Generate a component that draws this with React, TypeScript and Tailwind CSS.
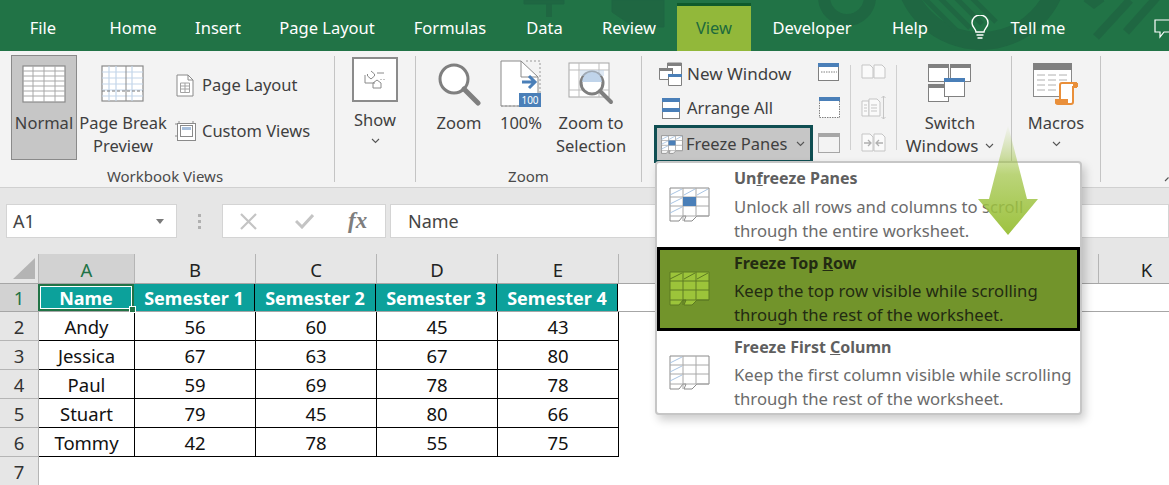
import React from "react";

const FONT = { fontFamily: '"Noto Sans", "Open Sans", sans-serif' };

function Chevron({ className = "" }: { className?: string }) {
  return (
    <svg width="9" height="6" viewBox="0 0 9 6" className={className}>
      <path d="M1 1l3.5 3.5L8 1" fill="none" stroke="#555" strokeWidth="1.1" />
    </svg>
  );
}

function NormalIcon() {
  return (
    <svg width="44" height="38" viewBox="0 0 44 38">
      <rect x="1" y="1" width="42" height="36" fill="#fff" stroke="#8a8a8a" strokeWidth="1.2" />
      {[6, 11, 16, 21, 26, 31].map((y) => (
        <path key={y} d={`M1 ${y}h42`} stroke="#a8a8a8" strokeWidth="1" />
      ))}
      {[11, 22, 33].map((x) => (
        <path key={x} d={`M${x} 1v36`} stroke="#a8a8a8" strokeWidth="1" />
      ))}
    </svg>
  );
}

function PageBreakIcon() {
  return (
    <svg width="44" height="38" viewBox="0 0 44 38">
      <rect x="1" y="1" width="41" height="35" fill="#fff" stroke="#8a8a8a" strokeWidth="1.2" />
      {[7, 13, 19, 25, 31].map((y) => (
        <path key={y} d={`M1 ${y}h41`} stroke="#c3d5ea" strokeWidth="1.2" />
      ))}
      {[8, 15, 31].map((x) => (
        <path key={x} d={`M${x} 1v35`} stroke="#c3d5ea" strokeWidth="1.2" />
      ))}
      <path d="M25 1v35" stroke="#8a8a8a" strokeWidth="1" />
      <path d="M1 26h41" stroke="#7a7a7a" strokeWidth="1" strokeDasharray="3 2" />
    </svg>
  );
}

function PageLayoutIcon() {
  return (
    <svg width="18" height="23" viewBox="0 0 18 23">
      <path d="M1 1h11l5 5v16H1z" fill="#fff" stroke="#8a8a8a" />
      <path d="M12 1v5h5" fill="none" stroke="#8a8a8a" />
      <path d="M4.5 9h9v9.5h-9zM4.5 12h9M4.5 15h9M9 9v9.5" fill="none" stroke="#a2a2a2" />
    </svg>
  );
}

function CustomViewsIcon() {
  return (
    <svg width="22" height="22" viewBox="0 0 22 22">
      <path d="M0 4h2M0 16h2M4 1v2M18 1v2M4 19v2" stroke="#8a8a8a" />
      <rect x="2.5" y="3.5" width="18" height="17" fill="#fff" stroke="#8a8a8a" />
      <rect x="5.5" y="5.5" width="12" height="11" fill="#fff" stroke="#8a8a8a" />
      <rect x="7" y="7" width="9" height="3" fill="#a7bfdc" />
    </svg>
  );
}

function ShowBox() {
  return (
    <div className="w-[46px] h-[45px] border-[2px] border-[#8b8b8b] bg-white flex items-center justify-center">
      <svg width="22" height="20" viewBox="0 0 22 20">
        <path
          d="M7 1l3.5 3V6L7 9 3.5 6V4M1 5v8h10M13 3h7M17 9v1M20 9v1M9 13l4-3 4 3v5H9z"
          fill="none"
          stroke="#8a8a8a"
          strokeWidth="1"
        />
      </svg>
    </div>
  );
}

function ZoomIcon() {
  return (
    <svg width="44" height="44" viewBox="0 0 44 44">
      <circle cx="17" cy="17" r="14" fill="#fff" stroke="#7f7f7f" strokeWidth="3" />
      <path d="M27 27l14 14" stroke="#7f7f7f" strokeWidth="5" strokeLinecap="round" />
    </svg>
  );
}

function HundredIcon() {
  return (
    <svg width="42" height="48" viewBox="0 0 42 48">
      <path d="M1 1h20l17 16v29H1z" fill="#fff" stroke="#8a8a8a" />
      <path d="M21 1v16h17" fill="none" stroke="#8a8a8a" />
      <path d="M26 1h14v45H1" fill="none" stroke="#999" strokeDasharray="2 2" />
      <path d="M22 22h13M29 16l6 6-6 6" fill="none" stroke="#4a7fb8" strokeWidth="3" />
      <rect x="19" y="33" width="22" height="14" fill="#4a7fb8" />
      <text x="30" y="44" textAnchor="middle" fontSize="10" fill="#fff" style={FONT}>
        100
      </text>
    </svg>
  );
}

function ZoomSelIcon() {
  return (
    <svg width="46" height="44" viewBox="0 0 46 44">
      <rect x="1" y="1" width="40" height="34" fill="#fff" stroke="#a5a5a5" />
      <path d="M1 8h40M1 28h40M11 1v34M31 1v34" stroke="#bdbdbd" />
      <circle cx="24" cy="21" r="11" fill="#fff" stroke="#7f7f7f" strokeWidth="3" />
      <path d="M14 20a10 10 0 0 1 20 0z" fill="#c0d4ea" />
      <path d="M12 8h24v6H12z" fill="#c0d4ea" opacity="0.5" />
      <path d="M32 29l11 11" stroke="#7f7f7f" strokeWidth="4" strokeLinecap="round" />
    </svg>
  );
}

function NewWindowIcon() {
  return (
    <svg width="24" height="24" viewBox="0 0 24 24">
      <path d="M8.5 1h14v13h-14z" fill="#fff" stroke="#808080" />
      <path d="M8 1h15v3H8z" fill="#808080" />
      <path d="M.5 6.5h13v11H.5z" fill="#fff" stroke="#808080" />
      <path d="M0 6h14v3H0z" fill="#808080" />
      <path d="M9.5 12.5h13v11h-13z" fill="#fff" stroke="#808080" />
      <path d="M9 12h14v3H9z" fill="#4a7fb8" />
    </svg>
  );
}

function ArrangeIcon() {
  return (
    <svg width="18" height="21" viewBox="0 0 18 21">
      <rect x=".5" y=".5" width="17" height="20" fill="#fff" stroke="#808080" />
      <path d="M0 0h18v4H0zM0 10h18v4H0z" fill="#4a7fb8" />
    </svg>
  );
}

function FreezeBase({ kind, w = 22, h = 19 }: { kind: "small" | "none" | "top" | "first"; w?: number; h?: number }) {
  const top = kind === "top";
  const line = top ? "#5d7a22" : "#8a8a8a";
  const inner = top ? "#5d7a22" : "#a8a8a8";
  const hatch = top ? "#5d7a22" : "#a9c4e2";
  const fill = top ? "#9cc43a" : "#fff";
  const sw = w < 30 ? 1.5 : 1;
  return (
    <svg width={w} height={h} viewBox="0 0 41 35">
      <path d="M1 1h39v28H28l-5 5H15l2-5H14l-4 5H1z" fill={fill} stroke={line} strokeWidth={sw} />
      <path d="M1 10h39M1 19h39M1 29h39M14 1v33M27 1v28" stroke={inner} strokeWidth={sw} />
      {kind === "none" || kind === "small" ? (
        <>
          <path d="M1 8l12-6M15 8l11-6M28 8l11-6" stroke={hatch} strokeWidth={w < 30 ? 1.6 : 1} />
          <path d="M1 17l12-6M1 26l12-6" stroke={hatch} strokeWidth={w < 30 ? 1.6 : 1} />
          <rect x="14" y="10" width="13" height="9" fill="#4a7fb8" />
        </>
      ) : null}
      {top ? <path d="M1 8l12-6M15 8l11-6M28 8l11-6" stroke={hatch} /> : null}
      {kind === "first" ? <path d="M1 8l12-6M1 17l12-6M1 26l12-6" stroke={hatch} /> : null}
    </svg>
  );
}

function SmallWin({ kind }: { kind: "split" | "hide" | "unhide" }) {
  return (
    <svg width="22" height="21" viewBox="0 0 22 21">
      {kind === "split" && (
        <>
          <rect x=".5" y="2.5" width="20" height="16" fill="#fff" stroke="#808080" />
          <path d="M0 1h21v4H0z" fill="#4a7fb8" />
          <path d="M3 10h16" stroke="#808080" strokeDasharray="1.5 1" />
        </>
      )}
      {kind === "hide" && (
        <>
          <rect x="1.5" y="1.5" width="20" height="19" fill="#fff" stroke="#808080" strokeDasharray="1.5 1" />
          <path d="M1 0h21v4H1z" fill="#4a7fb8" />
        </>
      )}
      {kind === "unhide" && (
        <>
          <rect x=".5" y="1.5" width="21" height="19" fill="none" stroke="#a6a6a6" />
          <path d="M0 1h22v4H0z" fill="#a6a6a6" />
        </>
      )}
    </svg>
  );
}

function DisabledPages({ kind }: { kind: "side" | "sync" | "reset" }) {
  const s = "#c5c5c5";
  return (
    <svg width="25" height="25" viewBox="0 0 25 25">
      {kind !== "sync" && (
        <>
          <path d={kind === "side" ? "M1 5h8l3 3v10H1z" : "M1 4h8l3 3v14H1z"} fill="#fafafa" stroke={s} />
          <path d={kind === "side" ? "M13 5h8l3 3v10H13z" : "M13 4h8l3 3v14H13z"} fill="#fafafa" stroke={s} />
          {kind === "reset" && <path d="M3 13h6M7 10l3 3-3 3M22 13h-7M18 10l-3 3 3 3" fill="none" stroke="#b0b0b0" strokeWidth="1.3" />}
        </>
      )}
      {kind === "sync" && (
        <>
          <path d="M1 6h7v15H1z" fill="#fafafa" stroke={s} />
          <path d="M8 4h8l3 3v14H8z" fill="#fafafa" stroke={s} />
          <path d="M10 10h6M10 13h6M10 16h6M3 10h3M3 13h3M3 16h3" stroke={s} />
          <path d="M22.5 1v23M20.5 3l2-2 2 2M20.5 22l2 2 2-2" fill="none" stroke={s} />
        </>
      )}
    </svg>
  );
}

function SwitchIcon() {
  return (
    <svg width="44" height="39" viewBox="0 0 44 39">
      {[
        [0, 0, 21, 18],
        [22, 0, 21, 18],
        [0, 20, 21, 18],
      ].map(([x, y, w, h], i) => (
        <g key={i}>
          <rect x={x + 0.5} y={y + 0.5} width={w - 1} height={h - 1} fill="#fff" stroke="#808080" />
          <rect x={x} y={y} width={w} height="4" fill="#808080" />
        </g>
      ))}
      <rect x="16.5" y="14.5" width="20" height="18" fill="#fff" stroke="#808080" />
      <rect x="16" y="14" width="21" height="4" fill="#4a7fb8" />
    </svg>
  );
}

function MacrosIcon() {
  return (
    <svg width="46" height="42" viewBox="0 0 46 42">
      <rect x=".5" y=".5" width="38" height="33" fill="#fff" stroke="#8a8a8a" />
      <rect x="0" y="0" width="39" height="7" fill="#808080" />
      <path d="M4 12h8M15 12h8M26 12h8M4 17h8M15 17h8M26 17h8M4 22h8M15 22h8M4 27h8M15 27h8" stroke="#b0b0b0" />
      <path d="M27 22a2 2 0 0 1 2-2h14v4h-3v15a2 2 0 0 1-2 2H25a3 3 0 0 1-2-1l0-3h4z" fill="#fff" stroke="#e98f3a" strokeWidth="2" />
      <path d="M23 36h12v5H25a3 3 0 0 1-2-3z" fill="#e98f3a" />
      <path d="M40 20h5v4h-5z" fill="#e98f3a" />
    </svg>
  );
}

function LargeButton({ w, icon, lines }: { w: string; icon: React.ReactNode; lines: string[] }) {
  return (
    <div className={`${w} flex flex-col items-center text-[#3f3f3f] shrink-0`}>
      <div className="h-[55px] flex items-center justify-center shrink-0">{icon}</div>
      {lines.map((l) => (
        <div key={l} className="text-[16.5px] leading-[23px] whitespace-nowrap">
          {l}
        </div>
      ))}
    </div>
  );
}

function Group({ w, label, labelClass = "", children }: { w: string; label?: string; labelClass?: string; children: React.ReactNode }) {
  return (
    <div className={`${w} h-[126px] flex flex-col border-r border-[#c4c4c4] shrink-0`}>
      <div className="h-[107px] flex shrink-0">{children}</div>
      {label && <div className={`text-[15px] leading-[26px] text-center text-[#4a4a4a] ${labelClass}`}>{label}</div>}
    </div>
  );
}

function Ribbon() {
  return (
    <div className="h-[137px] bg-[#f3f3f3] pt-[5px] flex border-b border-[#d0d0d0] relative">
      <Group w="w-[335px]" label="Workbook Views" labelClass="pr-[4px]">
        <div className="w-[11px] shrink-0" />
        <div className="w-[66px] h-[105px] -mt-px bg-[#c6c6c6] border border-[#8a8a8a] flex flex-col items-center text-[#3f3f3f]">
          <div className="h-[55px] flex items-center justify-center shrink-0">
            <NormalIcon />
          </div>
          <div className="text-[16.5px] leading-[23px]">Normal</div>
        </div>
        <LargeButton w="w-[92px]" icon={<PageBreakIcon />} lines={["Page Break", "Preview"]} />
        <div className="flex flex-col text-[16.5px] text-[#3f3f3f] pl-[6px]">
          <div className="h-[46px] mt-[6px] flex items-center gap-[8px] pl-[1px]">
            <PageLayoutIcon />
            <span>Page Layout</span>
          </div>
          <div className="h-[46px] flex items-center gap-[5px]">
            <CustomViewsIcon />
            <span>Custom Views</span>
          </div>
        </div>
      </Group>
      <Group w="w-[81px]">
        <div className="w-full flex flex-col items-center text-[#3f3f3f]">
          <div className="mt-[1px]">
            <ShowBox />
          </div>
          <div className="text-[16.5px] leading-[23px] mt-[6px]">Show</div>
          <Chevron className="mt-[7px]" />
        </div>
      </Group>
      <Group w="w-[226px]" label="Zoom">
        <div className="w-[14px] shrink-0" />
        <LargeButton w="w-[58px]" icon={<ZoomIcon />} lines={["Zoom"]} />
        <LargeButton w="w-[66px]" icon={<HundredIcon />} lines={["100%"]} />
        <LargeButton w="w-[74px]" icon={<ZoomSelIcon />} lines={["Zoom to", "Selection"]} />
      </Group>
      <Group w="w-[370px]">
        <div className="w-[12px] shrink-0" />
        <div className="w-[159px] flex flex-col text-[16.5px] text-[#3f3f3f] shrink-0">
          <div className="h-[35px] flex items-center pl-[5px] gap-[4px] text-[17px]">
            <NewWindowIcon />
            <span>New Window</span>
          </div>
          <div className="h-[34px] flex items-center pl-[8px] gap-[7px]">
            <ArrangeIcon />
            <span>Arrange All</span>
          </div>
          <div className="h-[38px] flex items-center pl-[4px] gap-[3px] bg-[#c6c6c6] border-[3px] border-[#0f4e52]">
            <FreezeBase kind="small" />
            <span>Freeze Panes</span>
            <Chevron className="ml-[5px]" />
          </div>
        </div>
        <div className="w-[37px] shrink-0 flex flex-col pl-[5px] pt-[6px] gap-[14px]">
          <SmallWin kind="split" />
          <SmallWin kind="hide" />
          <SmallWin kind="unhide" />
        </div>
        <div className="w-px h-[85px] mt-[9px] bg-[#d0d0d0] shrink-0" />
        <div className="w-[45px] shrink-0 flex flex-col items-center pt-[4px] gap-[10px]">
          <DisabledPages kind="side" />
          <DisabledPages kind="sync" />
          <DisabledPages kind="reset" />
        </div>
        <div className="w-px h-[85px] mt-[9px] bg-[#d0d0d0] shrink-0" />
        <div className="w-[106px] shrink-0 flex flex-col items-center text-[#3f3f3f]">
          <div className="h-[55px] flex items-center justify-center shrink-0">
            <SwitchIcon />
          </div>
          <div className="text-[16.5px] leading-[23px]">Switch</div>
          <div className="text-[17px] leading-[23px] flex items-center gap-[7px]">
            Windows
            <Chevron />
          </div>
        </div>
      </Group>
      <Group w="w-[89px]">
        <div className="w-full flex flex-col items-center text-[#3f3f3f]">
          <div className="h-[55px] flex items-center justify-center shrink-0">
            <MacrosIcon />
          </div>
          <div className="text-[16.5px] leading-[23px]">Macros</div>
          <Chevron className="mt-[7px]" />
        </div>
      </Group>
      <div className="flex-1 flex items-end justify-end overflow-hidden pb-[5px]">
        <svg width="5" height="6" viewBox="0 0 5 6">
          <path d="M1 5l3.5-3.5" fill="none" stroke="#555" strokeWidth="1.1" />
        </svg>
      </div>
    </div>
  );
}

const TABS: [string, string][] = [
  ["File", "w-[86px]"],
  ["Home", "w-[94px]"],
  ["Insert", "w-[76px]"],
  ["Page Layout", "w-[142px]"],
  ["Formulas", "w-[104px]"],
  ["Data", "w-[85px]"],
  ["Review", "w-[84px]"],
];

function TitleBar() {
  return (
    <div className="h-[51px] bg-[#217346] relative overflow-hidden">
      <svg className="absolute left-[480px] top-0" width="689" height="51" viewBox="0 0 689 51">
        <g fill="none" stroke="#1f6742" strokeWidth="8">
          <circle cx="367" cy="-3" r="23" strokeWidth="12" />
          <circle cx="501" cy="-38" r="79" strokeWidth="18" />
          <path d="M442 -4l34 34M458 -4l32 32M474 -4l28 28M490 -4l26 26" strokeWidth="5" />
          <path d="M69 0v17" strokeWidth="6" />
          <path d="M44 0h40v4H44z" fill="#1f6742" strokeWidth="1" />
          <path d="M132 0v12l22 15h30V0z" fill="#1f6742" strokeWidth="1" />
          <path d="M616 37l34-37M646 32l32-36M606 -2l8 6 8-6" />
        </g>
      </svg>
      <div className="relative h-full flex items-stretch text-[16.5px] text-white">
        {TABS.map(([t, w]) => (
          <div key={t} className={`${w} flex items-center justify-center shrink-0 pt-[5px]`}>
            {t}
          </div>
        ))}
        <div className="w-[6px] shrink-0" />
        <div className="w-[74px] shrink-0 mt-[3px] border-t-[3px] border-[#0f5a2c] bg-[#92b83a] text-[#1d6a3d] flex items-center justify-center pb-[1px]">
          View
        </div>
        <div className="w-[122px] shrink-0 flex items-center justify-center pt-[5px]">Developer</div>
        <div className="w-[74px] shrink-0 flex items-center justify-center pt-[5px]">Help</div>
        <div className="w-[14px] shrink-0" />
        <div className="w-[38px] shrink-0 flex items-center justify-center pt-[5px]">
          <svg width="20" height="26" viewBox="0 0 20 26">
            <path d="M6 17c0-3-4-5-4-9a8 8 0 0 1 16 0c0 4-4 6-4 9zM6.5 20h7M7.5 23h5" fill="none" stroke="#fff" strokeWidth="1.4" />
          </svg>
        </div>
        <div className="w-[78px] shrink-0 flex items-center justify-center pt-[5px]">Tell me</div>
        <div className="flex-1 flex items-start justify-end overflow-hidden pt-[19px]">
          <svg className="shrink-0" width="15" height="20" viewBox="0 0 15 20">
            <path d="M15 1H1v12h5v5l4-5h5" fill="none" stroke="#fff" strokeWidth="1.2" />
          </svg>
        </div>
      </div>
    </div>
  );
}

function FormulaBar() {
  return (
    <div className="bg-[#e6e6e6] pt-[16px] h-[66px] flex items-start text-[18px] text-[#444]">
      <div className="ml-[6px] w-[171px] h-[34px] bg-white border border-[#d4d4d4] flex items-center justify-between pl-[6px] pr-[12px] pt-px">
        <span>A1</span>
        <svg width="8" height="5" viewBox="0 0 8 5">
          <path d="M0 0h8L4 5z" fill="#7a7a7a" />
        </svg>
      </div>
      <div className="w-[45px] h-[34px] flex flex-col items-center justify-center gap-[3px]">
        <div className="w-[3px] h-[3px] bg-[#b0b0b0]" />
        <div className="w-[3px] h-[3px] bg-[#b0b0b0]" />
        <div className="w-[3px] h-[3px] bg-[#b0b0b0]" />
      </div>
      <div className="w-[164px] h-[34px] bg-white border border-[#d4d4d4] flex items-center pl-[17px]">
        <svg width="17" height="17" viewBox="0 0 17 17">
          <path d="M1 1l15 15M16 1L1 16" stroke="#c4c4c4" strokeWidth="2.2" />
        </svg>
        <svg width="19" height="16" viewBox="0 0 19 16" className="ml-[38px]">
          <path d="M1 8l6 6L18 2" fill="none" stroke="#c4c4c4" strokeWidth="3" />
        </svg>
        <span className="ml-[34px] text-[#7e7e7e] italic font-bold text-[23px]" style={{ fontFamily: '"Liberation Serif", serif' }}>
          fx
        </span>
      </div>
      <div className="ml-[4px] flex-1 h-[34px] bg-white border border-[#d4d4d4] flex items-center pl-[17px] pt-px">Name</div>
    </div>
  );
}

const COLS: [string, string][] = [
  ["A", "w-[96px]"],
  ["B", "w-[121px]"],
  ["C", "w-[121px]"],
  ["D", "w-[121px]"],
  ["E", "w-[121px]"],
  ["", "w-[480px]"],
  ["K", "w-[96px]"],
];

const ROWS = [
  ["Andy", "56", "60", "45", "43"],
  ["Jessica", "67", "63", "67", "80"],
  ["Paul", "59", "69", "78", "78"],
  ["Stuart", "79", "45", "80", "66"],
  ["Tommy", "42", "78", "55", "75"],
];
const CELLW = ["w-[96px]", "w-[121px]", "w-[121px]", "w-[121px]", "w-[121px]"];

function Sheet() {
  return (
    <div className="text-[18.5px]">
      <div className="h-[29px] flex bg-[#e6e6e6] text-[#222]">
        <div className="w-[39px] shrink-0 flex items-end justify-end pr-[3px] pb-[4px] border-r border-[#b5b5b5]">
          <svg width="22" height="21" viewBox="0 0 22 21">
            <path d="M22 0v21H0z" fill="#b4b4b4" />
          </svg>
        </div>
        {COLS.map(([c, w], i) => (
          <div
            key={i}
            className={`${w} shrink-0 flex items-center justify-center border-r border-[#b5b5b5] pt-[2px] ${
              i === 0 ? "bg-[#d2d2d2] text-[#217346]" : ""
            }`}
          >
            {c}
          </div>
        ))}
      </div>
      <div className="h-[29px] flex border-t border-b border-[#a6a6a6]">
        <div className="w-[39px] shrink-0 bg-[#d2d2d2] border-r border-[#a6a6a6] flex items-center justify-center text-[#217346] pt-[1px]">
          1
        </div>
        <div className="w-[96px] shrink-0 relative bg-[#0ca19b] border-2 border-[#217346] -ml-[1px] outline outline-1 -outline-offset-3 outline-white flex items-center justify-center font-bold text-white text-[18px] pt-[1px]">
          Name
          <div className="absolute right-[-4px] bottom-[-4px] w-[7px] h-[7px] bg-[#217346] border border-white" />
        </div>
        {["Semester 1", "Semester 2", "Semester 3", "Semester 4"].map((s) => (
          <div
            key={s}
            className="w-[121px] shrink-0 bg-[#0ca19b] border-r border-black flex items-center justify-center font-bold text-white whitespace-nowrap text-[18px] pt-[1px]"
          >
            {s}
          </div>
        ))}
      </div>
      {ROWS.map((r, i) => (
        <div key={i} className="h-[29px] flex text-[#111]">
          <div className="w-[39px] shrink-0 bg-[#e6e6e6] border-r border-b border-[#b5b5b5] flex items-center justify-center text-[#333] pt-[1px]">
            {i + 2}
          </div>
          {r.map((c, j) => (
            <div key={j} className={`${CELLW[j]} shrink-0 flex items-center justify-center border-r border-b border-black pt-[1px]`}>
              {c}
            </div>
          ))}
        </div>
      ))}
      <div className="h-[29px] flex">
        <div className="w-[39px] shrink-0 bg-[#e6e6e6] border-r border-[#b5b5b5] flex items-center justify-center text-[#333]">
          7
        </div>
      </div>
    </div>
  );
}

function MenuItem({
  kind,
  title,
  lines,
  selected,
  headShift,
}: {
  kind: "none" | "top" | "first";
  title: React.ReactNode;
  lines: string[];
  selected?: boolean;
  headShift?: boolean;
}) {
  return (
    <div
      className={`h-[84px] flex shrink-0 ${
        selected ? "bg-[#72942b] border-[3px] border-black text-[#232b12]" : "text-[#6b6b6b] px-[3px] py-[3px]"
      }`}
    >
      <div className="w-[74px] shrink-0 pt-[21px] pl-[9px]">
        <FreezeBase kind={kind} w={41} h={35} />
      </div>
      <div className="flex flex-col">
        <div className={`text-[16px] leading-[24px] font-bold whitespace-nowrap ${headShift ? "pt-px" : ""} ${selected ? "" : "text-[#5f5f5f]"}`}>{title}</div>
        <div className={`${headShift ? "mt-[4px]" : "mt-[5px]"} text-[16.7px] leading-[24px] whitespace-nowrap`}>
          {lines.map((l) => (
            <div key={l}>{l}</div>
          ))}
        </div>
      </div>
    </div>
  );
}

function Dropdown() {
  return (
    <div className="absolute left-[655px] top-[161px] w-[427px] h-[254px] bg-white rounded-[4px] border-2 border-[#c6c6c6] shadow-[3px_5px_10px_rgba(0,0,0,0.2)] flex flex-col overflow-hidden">
      <MenuItem
        kind="none"
        title={
          <>
            Un<u>f</u>reeze Panes
          </>
        }
        lines={["Unlock all rows and columns to scroll", "through the entire worksheet."]}
      />
      <MenuItem
        kind="top"
        selected
        headShift
        title={
          <>
            Freeze Top <u>R</u>ow
          </>
        }
        lines={["Keep the top row visible while scrolling", "through the rest of the worksheet."]}
      />
      <MenuItem
        kind="first"
        headShift
        title={
          <>
            Freeze First <u>C</u>olumn
          </>
        }
        lines={["Keep the first column visible while scrolling", "through the rest of the worksheet."]}
      />
    </div>
  );
}

function Arrow() {
  return (
    <svg className="absolute left-[974px] top-[123px]" width="68" height="116" viewBox="0 0 68 116">
      <defs>
        <linearGradient id="ag" x1="0" y1="0" x2="0" y2="1">
          <stop offset="0" stopColor="#9dc23f" stopOpacity="0" />
          <stop offset="0.45" stopColor="#9dc23f" stopOpacity="0.7" />
          <stop offset="1" stopColor="#9dc23f" stopOpacity="1" />
        </linearGradient>
      </defs>
      <path d="M34 2L15 76H4l30 36 30-36H53z" fill="url(#ag)" />
    </svg>
  );
}

export default function App() {
  return (
    <div className="w-[1169px] h-[485px] overflow-hidden relative bg-white" style={FONT}>
      <TitleBar />
      <Ribbon />
      <FormulaBar />
      <Sheet />
      <Dropdown />
      <Arrow />
    </div>
  );
}
